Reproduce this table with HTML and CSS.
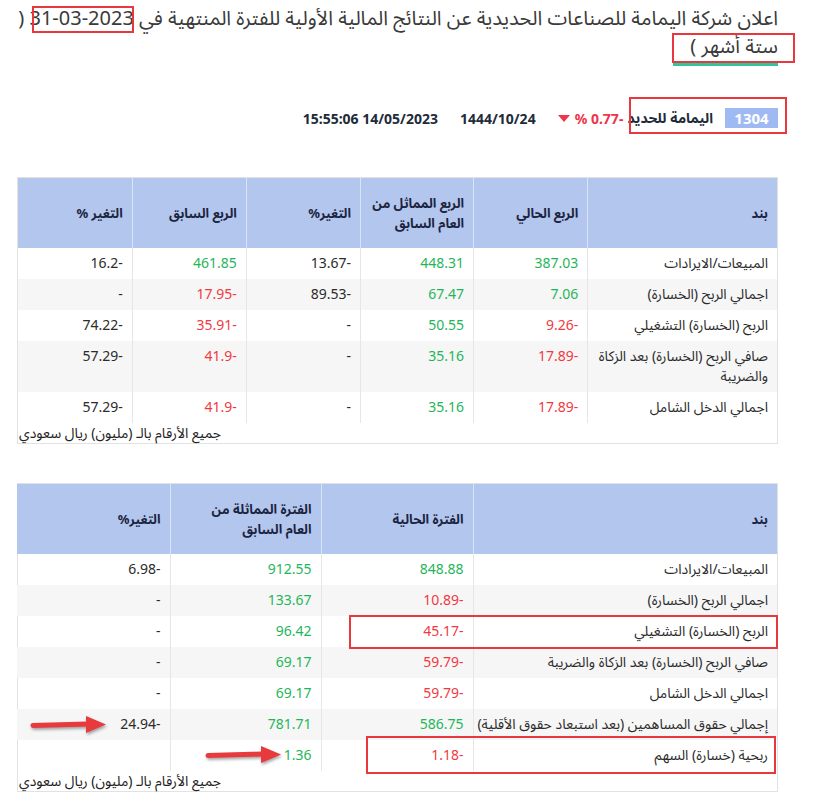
FILE: index.html
```html
<!DOCTYPE html>
<html lang="ar" dir="rtl">
<head>
<meta charset="utf-8">
<title>اعلان شركة اليمامة للصناعات الحديدية</title>
<link rel="stylesheet" href="styles.css">
</head>
<body>
<div class="page">
  <h1 class="title">اعلان شركة اليمامة للصناعات الحديدية عن النتائج المالية الأولية للفترة المنتهية في <span dir="ltr">31-03-2023</span> ( ستة أشهر )</h1>
  <div class="title-line"></div>

  <div class="ticker">
    <span class="code">1304</span>
    <span class="name">اليمامة للحديد</span>
    <span class="change">-0.77 %</span>
    <span class="down"></span>
    <span class="hijri">1444/10/24</span>
    <span class="time">14/05/2023 15:55:06</span>
  </div>

  <div class="fin fin-q">
    <table>
      <colgroup>
        <col class="c-item"><col class="c-q"><col class="c-q2"><col class="c-q"><col class="c-q"><col class="c-q">
      </colgroup>
      <thead>
        <tr>
          <th>بند</th>
          <th>الربع الحالي</th>
          <th>الربع المماثل من<br>العام السابق</th>
          <th>التغير%</th>
          <th>الربع السابق</th>
          <th>التغير %</th>
        </tr>
      </thead>
      <tbody>
        <tr><td>المبيعات/الايرادات</td><td class="g">387.03</td><td class="g">448.31</td><td>-13.67</td><td class="g">461.85</td><td>-16.2</td></tr>
        <tr><td>اجمالي الربح (الخسارة)</td><td class="g">7.06</td><td class="g">67.47</td><td>-89.53</td><td class="r">-17.95</td><td>-</td></tr>
        <tr><td>الربح (الخسارة) التشغيلي</td><td class="r">-9.26</td><td class="g">50.55</td><td>-</td><td class="r">-35.91</td><td>-74.22</td></tr>
        <tr><td>صافي الربح (الخسارة) بعد الزكاة والضريبة</td><td class="r">-17.89</td><td class="g">35.16</td><td>-</td><td class="r">-41.9</td><td>-57.29</td></tr>
        <tr><td>اجمالي الدخل الشامل</td><td class="r">-17.89</td><td class="g">35.16</td><td>-</td><td class="r">-41.9</td><td>-57.29</td></tr>
      </tbody>
    </table>
    <div class="note">جميع الأرقام بالـ (مليون) ريال سعودي</div>
  </div>

  <div class="fin fin-p">
    <table>
      <colgroup>
        <col class="p-item"><col class="p-c"><col class="p-c2"><col class="p-c3">
      </colgroup>
      <thead>
        <tr>
          <th>بند</th>
          <th>الفترة الحالية</th>
          <th>الفترة المماثلة من<br>العام السابق</th>
          <th>التغير%</th>
        </tr>
      </thead>
      <tbody>
        <tr><td>المبيعات/الايرادات</td><td class="g">848.88</td><td class="g">912.55</td><td>-6.98</td></tr>
        <tr><td>اجمالي الربح (الخسارة)</td><td class="r">-10.89</td><td class="g">133.67</td><td>-</td></tr>
        <tr><td>الربح (الخسارة) التشغيلي</td><td class="r">-45.17</td><td class="g">96.42</td><td>-</td></tr>
        <tr><td>صافي الربح (الخسارة) بعد الزكاة والضريبة</td><td class="r">-59.79</td><td class="g">69.17</td><td>-</td></tr>
        <tr><td>اجمالي الدخل الشامل</td><td class="r">-59.79</td><td class="g">69.17</td><td>-</td></tr>
        <tr><td class="long">إجمالي حقوق المساهمين (بعد استبعاد حقوق الأقلية)</td><td class="g">586.75</td><td class="g">781.71</td><td>-24.94</td></tr>
        <tr><td>ربحية (خسارة) السهم</td><td class="r">-1.18</td><td class="g">1.36</td><td></td></tr>
      </tbody>
    </table>
    <div class="note">جميع الأرقام بالـ (مليون) ريال سعودي</div>
  </div>

  <div class="ann ann-date"></div>
  <div class="ann ann-title"></div>
  <div class="ann ann-ticker"></div>
  <div class="ann ann-row3"></div>
  <div class="ann ann-row7"></div>

  <svg class="arrow arrow-1" width="82" height="24" viewBox="0 0 82 24" aria-hidden="true">
    <path d="M5 12.5 L60 11" stroke="#e8393d" stroke-width="5" stroke-linecap="round" fill="none"/>
    <polygon points="58,3 78,11.5 58,20" fill="#e8393d"/>
  </svg>
  <svg class="arrow arrow-2" width="82" height="24" viewBox="0 0 82 24" aria-hidden="true">
    <path d="M5 12.5 L60 11" stroke="#e8393d" stroke-width="5" stroke-linecap="round" fill="none"/>
    <polygon points="58,3 78,11.5 58,20" fill="#e8393d"/>
  </svg>
</div>
</body>
</html>
```

FILE: styles.css
```css
html, body {
  margin: 0;
  padding: 0;
  background: #ffffff;
}

body {
  font-family: "Noto Sans", "Noto Sans Arabic", "DejaVu Sans", sans-serif;
  color: #2b2b2b;
}

.page {
  position: relative;
  width: 836px;
  min-height: 800px;
  box-sizing: border-box;
  padding: 4px 58px 0 17px;
}

.title {
  margin: 0;
  font-size: 20px;
  font-weight: 400;
  line-height: 28px;
  color: #3a3a3a;
}

.title-line {
  width: 105px;
  height: 3px;
  margin-top: 3px;
  background: #2ec5a0;
}

.ticker {
  display: flex;
  align-items: center;
  height: 36px;
  margin-top: 34px;
  font-size: 14px;
  font-weight: 700;
  color: #222b3a;
}

.code {
  width: 53px;
  height: 20px;
  line-height: 20px;
  text-align: center;
  background: #9fb9f2;
  color: #ffffff;
  font-size: 15px;
}

.name {
  margin-right: 12px;
}

.change {
  margin-right: 4px;
  color: #f0344a;
}

.down {
  width: 0;
  height: 0;
  margin-right: 5px;
  border-left: 6px solid transparent;
  border-right: 6px solid transparent;
  border-top: 7px solid #f0344a;
}

.hijri {
  margin-right: 22px;
}

.time {
  margin-right: 22px;
}

.fin {
  border: 1px solid #e2e2e2;
}

.fin-q {
  margin-top: 41px;
}

.fin-p {
  margin-top: 39px;
}

table {
  width: 100%;
  border-collapse: collapse;
  table-layout: fixed;
  font-size: 14px;
}

.c-item { width: 189px; }
.c-q { width: 114px; }
.c-q2 { width: 113px; }

.p-item { width: 304px; }
.p-c { width: 152px; }
.p-c2 { width: 151px; }
.p-c3 { width: 153px; }

th {
  height: 70px;
  padding: 0 9px;
  background: #b3c6ee;
  color: #1b2440;
  font-size: 13px;
  font-weight: 700;
  line-height: 20px;
  text-align: right;
  vertical-align: middle;
  border-left: 1px solid #dbe3f6;
}

td {
  padding: 5px 9px 6px;
  line-height: 20px;
  text-align: right;
  vertical-align: top;
  border-left: 1px solid #e6e6e6;
  color: #2b2b2b;
}

td.long {
  padding-left: 2px;
  white-space: nowrap;
  letter-spacing: -0.2px;
}

th:last-child,
td:last-child {
  border-left: none;
}

tbody tr:nth-child(even) td {
  background: #f6f6f6;
}

.g { color: #1fb65a; }
.r { color: #f2393f; }

.note {
  font-size: 14px;
  line-height: 20px;
  text-align: left;
  color: #222;
  padding: 0 1px;
}

.ann {
  position: absolute;
  border: 2px solid #e8383d;
  box-sizing: border-box;
}

.ann-date { left: 32px; top: 6px; width: 102px; height: 27px; }
.ann-title { left: 672px; top: 33px; width: 123px; height: 30px; }
.ann-ticker { left: 629px; top: 97px; width: 158px; height: 37px; }
.ann-row3 { left: 349px; top: 615px; width: 429px; height: 34px; }
.ann-row7 { left: 366px; top: 736px; width: 410px; height: 38px; }

.arrow {
  position: absolute;
  filter: drop-shadow(1px 2px 1.5px rgba(0, 0, 0, 0.35));
}

.arrow-1 { left: 28px; top: 713px; }
.arrow-2 { left: 203px; top: 743px; }
```
